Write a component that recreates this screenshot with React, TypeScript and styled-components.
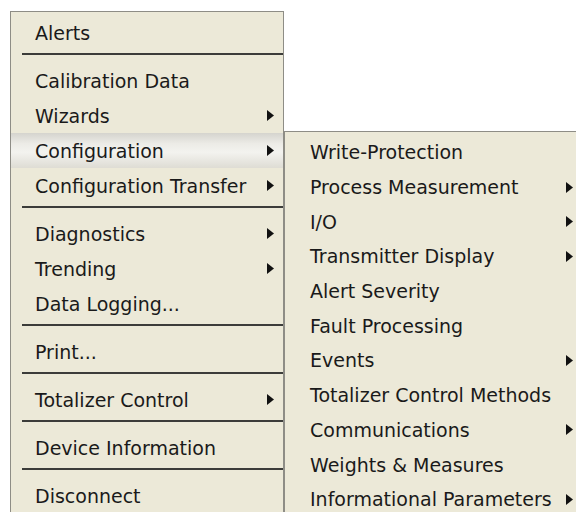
import React from "react";
import styled, { createGlobalStyle } from "styled-components";

type Entry = { label: string; sub?: boolean; active?: boolean } | "sep";

const mainItems: Entry[] = [
  { label: "Alerts" },
  "sep",
  { label: "Calibration Data" },
  { label: "Wizards", sub: true },
  { label: "Configuration", sub: true, active: true },
  { label: "Configuration Transfer", sub: true },
  "sep",
  { label: "Diagnostics", sub: true },
  { label: "Trending", sub: true },
  { label: "Data Logging..." },
  "sep",
  { label: "Print..." },
  "sep",
  { label: "Totalizer Control", sub: true },
  "sep",
  { label: "Device Information" },
  "sep",
  { label: "Disconnect" },
];

const subItems: Entry[] = [
  { label: "Write-Protection" },
  { label: "Process Measurement", sub: true },
  { label: "I/O", sub: true },
  { label: "Transmitter Display", sub: true },
  { label: "Alert Severity" },
  { label: "Fault Processing" },
  { label: "Events", sub: true },
  { label: "Totalizer Control Methods" },
  { label: "Communications", sub: true },
  { label: "Weights & Measures" },
  { label: "Informational Parameters", sub: true },
];

const GlobalStyle = createGlobalStyle`
  html, body {
    margin: 0;
    padding: 0;
    background: #ffffff;
    overflow: hidden;
  }
`;

const Screen = styled.div`
  display: flex;
  align-items: flex-start;
  padding: 11px 0 0 10px;
  width: 576px;
  height: 512px;
  box-sizing: border-box;
  overflow: hidden;
  font-family: "DejaVu Sans", "Noto Sans", sans-serif;
  font-size: 19px;
  color: #1a1a1a;
`;

const Menu = styled.div<{ $top?: number; $width: number }>`
  flex-shrink: 0;
  width: ${({ $width }) => $width}px;
  margin-top: ${({ $top }) => $top ?? 0}px;
  padding: 3px 0 6px;
  background: #ece9d8;
  border: 1px solid #8e8d86;
  border-bottom: none;
  display: flex;
  flex-direction: column;
`;

const Row = styled.div<{ $h: number; $active?: boolean; $indent: number; $right: number }>`
  height: ${({ $h }) => $h}px;
  display: flex;
  align-items: center;
  padding: 0 ${({ $right }) => $right}px 0 ${({ $indent }) => $indent}px;
  white-space: nowrap;
  background: ${({ $active }) =>
    $active
      ? "linear-gradient(180deg, #d5d4ce 0%, #ecebe6 30%, #f3f3ef 55%, #dedcd4 100%)"
      : "transparent"};
`;

const Label = styled.span`
  flex: 1;
`;

const Separator = styled.div`
  height: 2px;
  margin: 3px 0 8px 11px;
  background: #3c3c3a;
`;

const Arrow = () => (
  <svg width="7" height="11" viewBox="0 0 7 11">
    <polygon points="0,0 7,5.5 0,11" fill="#111" />
  </svg>
);

const MenuList: React.FC<{
  items: Entry[];
  width: number;
  top?: number;
  rowH: number;
  indent: number;
  right: number;
}> = ({ items, width, top, rowH, indent, right }) => (
  <Menu $width={width} $top={top}>
    {items.map((it, i) =>
      it === "sep" ? (
        <Separator key={i} />
      ) : (
        <Row key={i} $h={rowH} $active={it.active} $indent={indent} $right={right}>
          <Label>{it.label}</Label>
          {it.sub && <Arrow />}
        </Row>
      )
    )}
  </Menu>
);

export default function App() {
  return (
    <>
      <GlobalStyle />
      <Screen>
        <MenuList items={mainItems} width={272} rowH={35} indent={24} right={9} />
        <MenuList items={subItems} width={300} top={120} rowH={34.7} indent={25} right={12} />
      </Screen>
    </>
  );
}
